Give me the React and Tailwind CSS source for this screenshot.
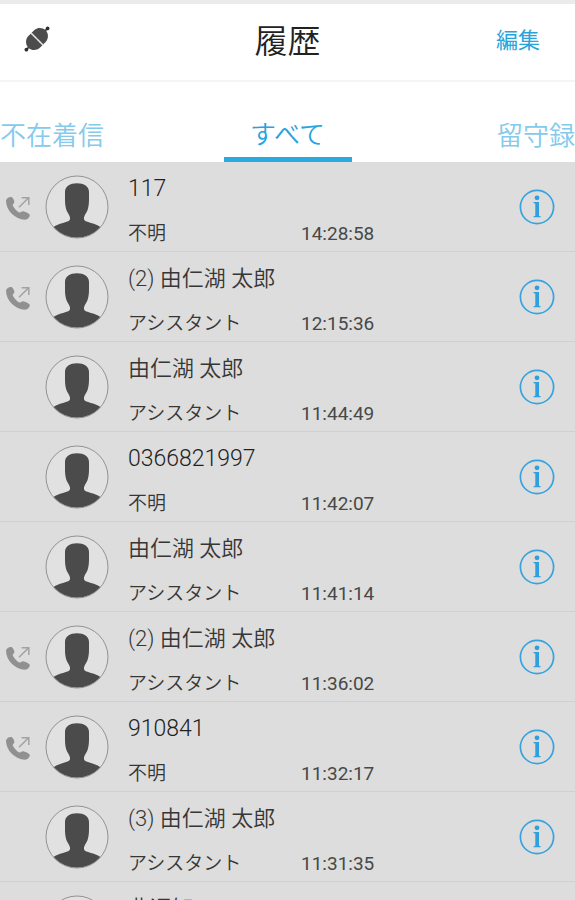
import React from "react";

const calls = [
  { name: "117", label: "不明", time: "14:28:58", outgoing: true },
  { name: "(2) 由仁湖 太郎", label: "アシスタント", time: "12:15:36", outgoing: true },
  { name: "由仁湖 太郎", label: "アシスタント", time: "11:44:49" },
  { name: "0366821997", label: "不明", time: "11:42:07" },
  { name: "由仁湖 太郎", label: "アシスタント", time: "11:41:14" },
  { name: "(2) 由仁湖 太郎", label: "アシスタント", time: "11:36:02", outgoing: true },
  { name: "910841", label: "不明", time: "11:32:17", outgoing: true },
  { name: "(3) 由仁湖 太郎", label: "アシスタント", time: "11:31:35" },
  { name: "非通知" },
];

function PlugIcon() {
  return (
    <svg viewBox="0 0 26 26" className="size-[26px]" aria-hidden="true">
      <g transform="rotate(-45 13 13)" fill="#4c4c4c">
        <path d="M-2 13H28" stroke="#484848" strokeWidth="2" />
        <circle cx="-2" cy="13" r="1.8" fill="#2c2c2c" />
        <circle cx="28" cy="13" r="1.8" fill="#2c2c2c" />
        <path d="M12.500 4.800H8C4 5.400 0.800 9 0.800 13s3.200 7.600 7.200 8.200h4.500z" />
        <path d="M13.500 4.800H18C22 5.400 25.200 9 25.200 13s-3.200 7.600-7.200 8.200h-4.500z" />
        <path d="M13 4.800V21.200" stroke="#e4e4e4" strokeWidth="1.200" />
      </g>
    </svg>
  );
}

function OutgoingIcon() {
  return (
    <svg viewBox="0 0 26 26" className="size-[26px]" role="img" aria-label="発信">
      <path
        d="M1 6.500C1.600 4.200 4.200 2.400 6.600 3C8.200 4.200 9.200 6.200 9.400 8C9.400 9.600 7.400 10 7.800 11.400C9 14 11.600 17 14.200 18.400C15.800 18.800 16.600 17.200 18 17.300C20.400 17.600 23.400 19 24.800 20.800C25 23.200 22.800 25.400 20 25.800C10 25 1 17 1 6.500Z"
        fill="#909090"
      />
      <path d="M14 13.200L23.600 3.800M16.600 3.800H23.800V11" fill="none" stroke="#a2a2a2" strokeWidth="1.500" />
    </svg>
  );
}

function Avatar() {
  return (
    <svg viewBox="0 0 64 64" className="size-16" aria-hidden="true">
      <circle cx="32" cy="32" r="31" fill="#e1e1e1" />
      <path
        d="M8.600 52.200C12 49.400 18 48.200 22.500 46.600C24.600 45.800 25.200 44.600 25 42.500C24.600 40 22.600 38 21.600 35.500C20.600 32.500 20 29 20 25V17C20 11.500 25 8.200 32 8.200S44 11.500 44 17V25C44 29 43.400 32.500 42.400 35.500C41.400 38 39.400 40 39 42.500C38.800 44.600 39.400 45.800 41.500 46.600C46 48.200 52 49.400 55.400 52.200A31 31 0 0 1 8.600 52.200Z"
        fill="#4b4b4b"
      />
      <circle cx="32" cy="32" r="31" fill="none" stroke="#929292" strokeWidth="1" />
    </svg>
  );
}

function InfoIcon() {
  return (
    <svg viewBox="0 0 36 36" className="size-9" aria-hidden="true">
      <circle cx="18" cy="18" r="16.600" fill="none" stroke="#36a3de" strokeWidth="1.700" />
      <circle cx="18" cy="8.800" r="2.400" fill="#2f9fdd" />
      <path d="M14.600 13H20V26.800L21.600 27.200V28.200H14.600V27.200L16.300 26.800V14.600L14.600 14.200Z" fill="#2f9fdd" />
    </svg>
  );
}

function CallRow({ call }) {
  const numeric = /^\d+$/.test(call.name);
  return (
    <li className="flex h-[90px] shrink-0 items-center border-b border-[#d0d0d0] pr-5">
      <div className="w-[45px] shrink-0 pl-[5px]">{call.outgoing && <OutgoingIcon />}</div>
      <Avatar />
      <div className="ml-[19px] min-w-0 flex-1 self-start pt-1">
        <p className={numeric ? "text-[23px] leading-[45px] text-[#222222]" : "text-[22px] leading-[45px]"}>{call.name}</p>
        {call.time && (
          <div className="flex text-[19px] leading-[45px]">
            <span className="w-[173px]">{call.label}</span>
            <time className="font-normal text-[#484848]">{call.time}</time>
          </div>
        )}
      </div>
      <button type="button" aria-label="詳細">
        <InfoIcon />
      </button>
    </li>
  );
}

export default function App() {
  return (
    <div className="flex h-screen flex-col overflow-hidden bg-white font-['Roboto','Noto_Sans_CJK_JP',sans-serif] font-[350] text-[#363636]">
      <header className="grid h-[82px] shrink-0 grid-cols-[1fr_auto_1fr] items-center border-t-4 border-b-2 border-t-[#ebebeb] border-b-[#f5f5f5] px-6">
        <button type="button" aria-label="接続" className="justify-self-start pb-1.5">
          <PlugIcon />
        </button>
        <h1 className="text-[33px] font-[350] text-[#222222]">履歴</h1>
        <button type="button" className="mr-[11px] justify-self-end pb-1 text-[22px] font-normal text-[#27a4de]">
          編集
        </button>
      </header>
      <nav className="grid h-20 shrink-0 grid-cols-[1fr_128px_1fr] text-[26px] text-[#84caec]">
        <button type="button" className="pt-7 text-left">
          不在着信
        </button>
        <button type="button" aria-current="page" className="border-b-[5px] border-[#29abe0] pt-8 text-[#27a4de]">
          すべて
        </button>
        <button type="button" className="pt-7 text-right">
          留守録
        </button>
      </nav>
      <ul className="flex min-h-0 flex-1 flex-col overflow-hidden bg-[#dddddd]">
        {calls.map((call, index) => (
          <CallRow key={index} call={call} />
        ))}
      </ul>
    </div>
  );
}
